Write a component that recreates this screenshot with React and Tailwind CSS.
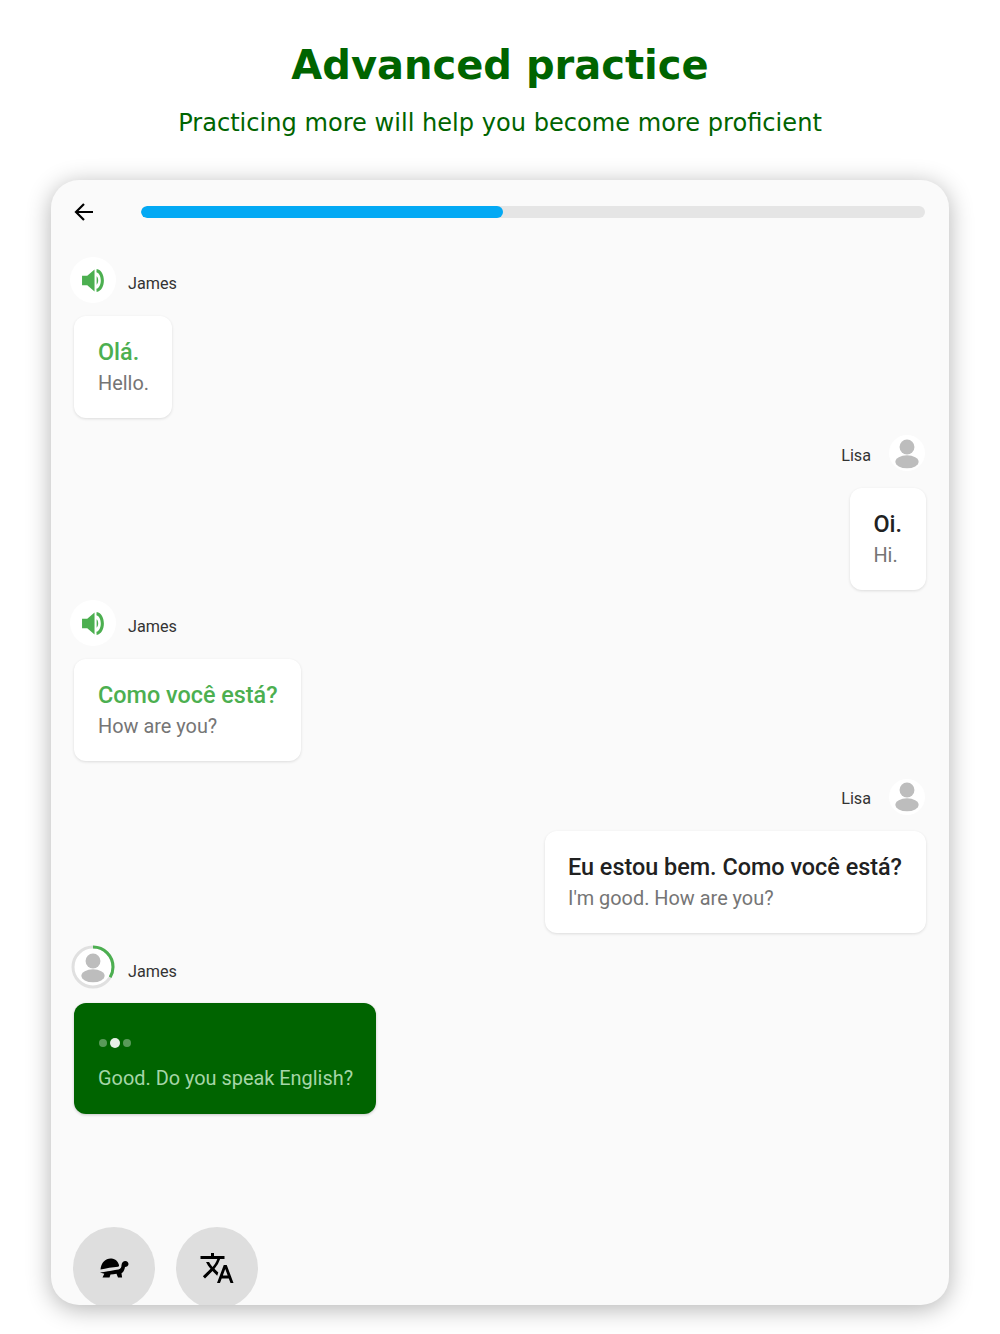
import React from 'react';
import { MdTranslate } from 'react-icons/md';

const messages = [
  { who: 'James', pt: 'Olá.', en: 'Hello.' },
  { who: 'Lisa', pt: 'Oi.', en: 'Hi.', me: true },
  { who: 'James', pt: 'Como você está?', en: 'How are you?' },
  { who: 'Lisa', pt: 'Eu estou bem. Como você está?', en: "I'm good. How are you?", me: true },
];

function Speaker() {
  return (
    <svg viewBox="0 0 24 24" className="w-[25px] h-[25px] ml-[1px]">
      <path d="M1 7.500h5L13 1.500v21L6 16.500H1z" fill="#4caf50" />
      <path d="M15 8c2 1.500 2 6.500 0 8z" fill="#4caf50" />
      <path d="M15 1c9.300 1.500 9.300 20.500 0 22l-.2-3c5.600-1.500 5.600-14.500 0-16z" fill="#4caf50" />
    </svg>
  );
}

function Person({ size = 'w-[26px] h-[31px]' }) {
  return (
    <svg viewBox="0 0 28 32" className={size}>
      <circle cx="14" cy="9" r="8" fill="#bdbdbd" />
      <ellipse cx="14" cy="25" rx="12.5" ry="7" fill="#bdbdbd" />
    </svg>
  );
}

function Turtle() {
  return (
    <svg viewBox="0 0 30 22" className="w-[30px] h-[22px]">
      <path d="M1.500 12.500C2 5.500 7 1 12.500 1.500c4 .3 6.500 3 7.500 6.500.2 1-.2 1.500-1 1.700-5.500.5-12 1.500-17.500 2.800z" fill="#000" />
      <path d="M1 15.500c6-.8 13-2 18.500-3 2.500-.6 3-2.500 3-4.500.3-2.500 2-4 3.800-4 2 0 3.200 1.500 3.200 3 0 2-1.800 3-3.500 3-.5 3-1.500 5-3.500 6.300l.6 4.200H19l-1.500-3.700c-2 .5-4 .6-6 .6l-1 3.100H3.500l1.800-3.800z" fill="#000" />
    </svg>
  );
}

function Message({ who, pt, en, me }) {
  return (
    <div className={`flex flex-col ${me ? 'items-end' : 'items-start'}`}>
      {me ? (
        <div className="flex items-center gap-[18px] h-[46px] mr-[1px]">
          <span className="text-[16.200px] text-[#333] mt-[8px]">{who}</span>
          <div className="w-[36px] h-[36px] mt-[3px] rounded-full bg-white flex items-center justify-center">
            <Person />
          </div>
        </div>
      ) : (
        <div className="flex items-center gap-[12px] h-[46px] ml-[-4px]">
          <div className="w-[46px] h-[46px] rounded-full bg-white flex items-center justify-center">
            <Speaker />
          </div>
          <span className="text-[16.200px] text-[#333] mt-[8px]">{who}</span>
        </div>
      )}
      <div className={`mt-[13px] bg-white rounded-[12px] shadow-[0_1px_3px_rgba(0,0,0,0.12)] pt-[20px] h-[102px] ${me ? 'pl-[23px] pr-[24px]' : 'pl-[24px] pr-[23px]'}`}>
        <p className={`text-[23.400px] leading-[32px] font-medium whitespace-nowrap ${me ? 'text-[#212121]' : 'text-[#4caf50]'}`}>{pt}</p>
        <p className="text-[19.900px] leading-[30px] mt-[1px] text-[#757575] whitespace-nowrap">{en}</p>
      </div>
    </div>
  );
}

export default function App() {
  return (
    <div className="w-[1000px] h-[1334px] bg-white overflow-hidden font-['Roboto',sans-serif]">
      <div className="text-center text-[#006400] font-['DejaVu_Sans',sans-serif] pt-[38px]">
        <h1 className="text-[40px] leading-[54px] font-bold">Advanced practice</h1>
        <p className="text-[24.100px] leading-[34px] mt-[14px]">Practicing more will help you become more proficient</p>
      </div>

      <div className="relative mx-[51px] mt-[40px] h-[1125px] rounded-[28px] bg-[#fafafa] shadow-[0_4px_24px_rgba(0,0,0,0.3)] overflow-hidden px-[23px]">
        <div className="flex items-center h-[24px] mt-[20px] ml-[-1px] mr-[1px]">
          <svg viewBox="0 0 24 24" className="w-[24px] h-[24px] mr-[44px] text-black" fill="none" stroke="currentColor" strokeWidth="2.200">
            <path d="M20 12H3M11 4l-8 8 8 8" />
          </svg>
          <div className="flex-1 h-[12px] rounded-full bg-[#e5e5e5] overflow-hidden">
            <div className="w-[362px] h-full rounded-full bg-[#03a9f4]" />
          </div>
        </div>

        <div className="flex flex-col gap-[10.700px] mt-[33px]">
          {messages.map((m, i) => <Message key={i} {...m} />)}
        </div>

        <div className="mt-[11px] flex items-center gap-[13px] h-[46px]">
          <div className="relative w-[44px] h-[44px] ml-[-3px] flex items-center justify-center">
            <svg viewBox="0 0 44 44" className="absolute inset-0 w-[44px] h-[44px] -rotate-90">
              <circle cx="22" cy="22" r="20" fill="#fff" stroke="#e0e0e0" strokeWidth="3" />
              <circle cx="22" cy="22" r="20" fill="none" stroke="#4caf50" strokeWidth="3" strokeDasharray="42 126" />
            </svg>
            <div className="relative"><Person /></div>
          </div>
          <span className="text-[16.200px] text-[#333] mt-[10px]">James</span>
        </div>

        <div className="mt-[13px] w-[302px] h-[111px] rounded-[12px] bg-[#006400] shadow-[0_1px_3px_rgba(0,0,0,0.2)] px-[24px] pt-[34px]">
          <div className="flex items-center gap-[3px] h-[11px] ml-[1px]">
            <span className="w-[8px] h-[8px] rounded-full bg-white/35" />
            <span className="w-[10px] h-[10px] rounded-full bg-white/90" />
            <span className="w-[8px] h-[8px] rounded-full bg-white/35" />
          </div>
          <p className="mt-[16px] text-[19.900px] leading-[30px] text-[#a5d6a7] whitespace-nowrap">Good. Do you speak English?</p>
        </div>

        <div className="absolute left-[22px] top-[1047px] flex gap-[21px]">
          <div className="w-[82px] h-[82px] rounded-full bg-[#dedede] flex items-center justify-center">
            <Turtle />
          </div>
          <div className="w-[82px] h-[82px] rounded-full bg-[#dedede] flex items-center justify-center">
            <MdTranslate className="w-[36px] h-[36px] text-black" />
          </div>
        </div>
      </div>
    </div>
  );
}
